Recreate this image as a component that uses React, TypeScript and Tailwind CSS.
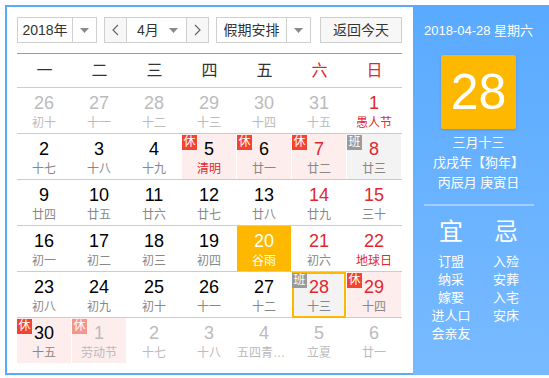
import React from "react";

type Cell = {
  d: string;
  l: string;
  out?: boolean;
  red?: boolean;
  fest?: boolean;
  badge?: "休" | "班";
  bg?: "pink" | "gray" | "orange";
  today?: boolean;
};

const rows: Cell[][] = [
  [
    { d: "26", l: "初十", out: true },
    { d: "27", l: "十一", out: true },
    { d: "28", l: "十二", out: true },
    { d: "29", l: "十三", out: true },
    { d: "30", l: "十四", out: true },
    { d: "31", l: "十五", out: true },
    { d: "1", l: "愚人节", red: true, fest: true },
  ],
  [
    { d: "2", l: "十七" },
    { d: "3", l: "十八" },
    { d: "4", l: "十九" },
    { d: "5", l: "清明", fest: true, badge: "休", bg: "pink" },
    { d: "6", l: "廿一", badge: "休", bg: "pink" },
    { d: "7", l: "廿二", red: true, badge: "休", bg: "pink" },
    { d: "8", l: "廿三", red: true, badge: "班", bg: "gray" },
  ],
  [
    { d: "9", l: "廿四" },
    { d: "10", l: "廿五" },
    { d: "11", l: "廿六" },
    { d: "12", l: "廿七" },
    { d: "13", l: "廿八" },
    { d: "14", l: "廿九", red: true },
    { d: "15", l: "三十", red: true },
  ],
  [
    { d: "16", l: "初一" },
    { d: "17", l: "初二" },
    { d: "18", l: "初三" },
    { d: "19", l: "初四" },
    { d: "20", l: "谷雨", bg: "orange" },
    { d: "21", l: "初六", red: true },
    { d: "22", l: "地球日", red: true, fest: true },
  ],
  [
    { d: "23", l: "初八" },
    { d: "24", l: "初九" },
    { d: "25", l: "初十" },
    { d: "26", l: "十一" },
    { d: "27", l: "十二" },
    { d: "28", l: "十三", red: true, badge: "班", bg: "gray", today: true },
    { d: "29", l: "十四", red: true, badge: "休", bg: "pink" },
  ],
  [
    { d: "30", l: "十五", badge: "休", bg: "pink" },
    { d: "1", l: "劳动节", out: true, badge: "休", bg: "pink" },
    { d: "2", l: "十七", out: true },
    { d: "3", l: "十八", out: true },
    { d: "4", l: "五四青年节", out: true },
    { d: "5", l: "立夏", out: true },
    { d: "6", l: "廿一", out: true },
  ],
];

const weekdays = ["一", "二", "三", "四", "五", "六", "日"];

function Tri() {
  return (
    <svg width="9" height="5" viewBox="0 0 9 5">
      <path d="M0 0 L9 0 L4.5 5 Z" fill="#8a8a8a" />
    </svg>
  );
}

function DayCell({ c }: { c: Cell }) {
  let bg = "";
  if (c.bg === "pink") bg = "bg-[#fdeded]";
  else if (c.bg === "gray") bg = "bg-[#f3f3f3]";
  else if (c.bg === "orange") bg = "bg-[#ffb800]";

  let numCls = "text-black";
  if (c.bg === "orange") numCls = "text-white";
  else if (c.out) numCls = "text-[#bbbbbb]";
  else if (c.red) numCls = "text-[#e0282d]";

  let lunCls = "text-[#888888]";
  if (c.bg === "orange") lunCls = "text-white";
  else if (c.out) lunCls = "text-[#bbbbbb]";
  else if (c.fest) lunCls = "text-[#e0282d]";

  let badgeCls = "";
  if (c.badge === "休") badgeCls = c.out ? "bg-[#f6968a]" : "bg-[#f5432f]";
  else if (c.badge === "班") badgeCls = "bg-[#9a9a9a]";

  return (
    <div className="relative w-[55px] h-full">
      <div className={`mr-[1px] h-full flex flex-col items-center pt-[5px] ${bg}`}>
        <div className={`text-[18px] leading-[20px] h-[20px] ${numCls}`}>{c.d}</div>
        <div
          className={`mt-[2px] text-[12px] leading-[16px] w-full text-center whitespace-nowrap overflow-hidden text-ellipsis ${lunCls}`}
        >
          {c.l}
        </div>
      </div>
      {c.today && (
        <div className="absolute left-0 right-[1px] top-0 bottom-[-1px] border-2 border-[#ffb800]" />
      )}
      {c.badge && (
        <div
          className={`absolute left-0 top-[1px] w-[15px] h-[15px] flex items-center justify-center text-white text-[12px] leading-[15px] ${badgeCls}`}
        >
          {c.badge}
        </div>
      )}
    </div>
  );
}

export default function App() {
  return (
    <div className="w-[549px] h-[378px] bg-white overflow-hidden font-['Liberation_Sans','Noto_Sans_CJK_SC',sans-serif]">
      <div className="ml-[5px] mt-[5px] flex h-[370px]">
        {/* left calendar */}
        <div className="w-[408px] h-[370px] border-2 border-r-0 border-[#5aa9fd] bg-white pt-[10px] pl-[10px]">
          {/* controls */}
          <div className="flex h-[26px] text-[14px] text-[#333]">
            <div className="w-[80px] h-[26px] border border-[#cfcfcf] flex">
              <div className="w-[54px] flex items-center justify-center">2018年</div>
              <div className="flex-1 border-l border-[#cfcfcf] flex items-center justify-center">
                <Tri />
              </div>
            </div>
            <div className="ml-[7px] w-[105px] h-[26px] border border-[#cfcfcf] flex">
              <div className="w-[22px] bg-[#f7f7f7] flex items-center justify-center border-r border-[#cfcfcf]">
                <svg width="7" height="12" viewBox="0 0 7 12">
                  <path d="M6 1 L1 6 L6 11" stroke="#666" strokeWidth="1.2" fill="none" />
                </svg>
              </div>
              <div className="flex-1 flex items-center pl-[10px] pr-[8px] justify-between">
                <span>4月</span>
                <Tri />
              </div>
              <div className="w-[22px] bg-[#f7f7f7] flex items-center justify-center border-l border-[#cfcfcf]">
                <svg width="7" height="12" viewBox="0 0 7 12">
                  <path d="M1 1 L6 6 L1 11" stroke="#666" strokeWidth="1.2" fill="none" />
                </svg>
              </div>
            </div>
            <div className="ml-[7px] w-[95px] h-[26px] border border-[#cfcfcf] flex">
              <div className="w-[69px] flex items-center justify-center">假期安排</div>
              <div className="flex-1 border-l border-[#cfcfcf] flex items-center justify-center">
                <Tri />
              </div>
            </div>
            <div className="ml-[9px] w-[82px] h-[26px] border border-[#cfcfcf] bg-[#f7f7f7] flex items-center justify-center">
              返回今天
            </div>
          </div>
          {/* blue line */}
          <div className="mt-[10px] w-[385px] h-[1px] bg-[#5aa9fd]" />
          {/* weekday header */}
          <div className="w-[385px] h-[34px] border-b border-[#cccccc] grid grid-cols-7 text-[16px]">
            {weekdays.map((w, i) => (
              <div
                key={w}
                className={`flex items-center justify-center ${i >= 5 ? "text-[#e0282d]" : "text-[#333]"}`}
              >
                {w}
              </div>
            ))}
          </div>
          {/* rows */}
          {rows.map((r, ri) => (
            <div
              key={ri}
              className={`w-[385px] flex ${ri < rows.length - 1 ? "h-[46px] border-b border-[#cccccc]" : "h-[45px]"}`}
            >
              {r.map((c, ci) => (
                <DayCell key={ci} c={c} />
              ))}
            </div>
          ))}
        </div>
        {/* right panel */}
        <div className="w-[136px] h-[370px] bg-gradient-to-b from-[#59aaff] to-[#78baff] pr-[5px] flex flex-col items-center text-white">
          <div className="mt-[16px] text-[13px] leading-[20px] whitespace-nowrap">2018-04-28 星期六</div>
          <div className="mt-[14px] w-[75px] h-[74px] rounded-[2px] bg-[#ffb800] shadow-[0_1px_3px_rgba(0,0,0,0.15)] flex items-center justify-center text-[50px] leading-none">
            28
          </div>
          <div className="mt-[4px] text-[13px] leading-[20px]">三月十三</div>
          <div className="text-[13px] leading-[20px] whitespace-nowrap">戊戌年【狗年】</div>
          <div className="text-[13px] leading-[20px] whitespace-nowrap">丙辰月 庚寅日</div>
          <div className="mt-[11px] w-[110px] h-[2px] bg-[#a2cfff]" />
          <div className="mt-[11px] flex">
            <div className="w-[55px] flex flex-col items-center">
              <div className="text-[24px] leading-[30px]">宜</div>
              <div className="mt-[6px] flex flex-col items-center text-[13px] leading-[18px]">
                <div>订盟</div>
                <div>纳采</div>
                <div>嫁娶</div>
                <div>进人口</div>
                <div>会亲友</div>
              </div>
            </div>
            <div className="w-[55px] flex flex-col items-center">
              <div className="text-[24px] leading-[30px]">忌</div>
              <div className="mt-[6px] flex flex-col items-center text-[13px] leading-[18px]">
                <div>入殓</div>
                <div>安葬</div>
                <div>入宅</div>
                <div>安床</div>
              </div>
            </div>
          </div>
        </div>
      </div>
    </div>
  );
}
